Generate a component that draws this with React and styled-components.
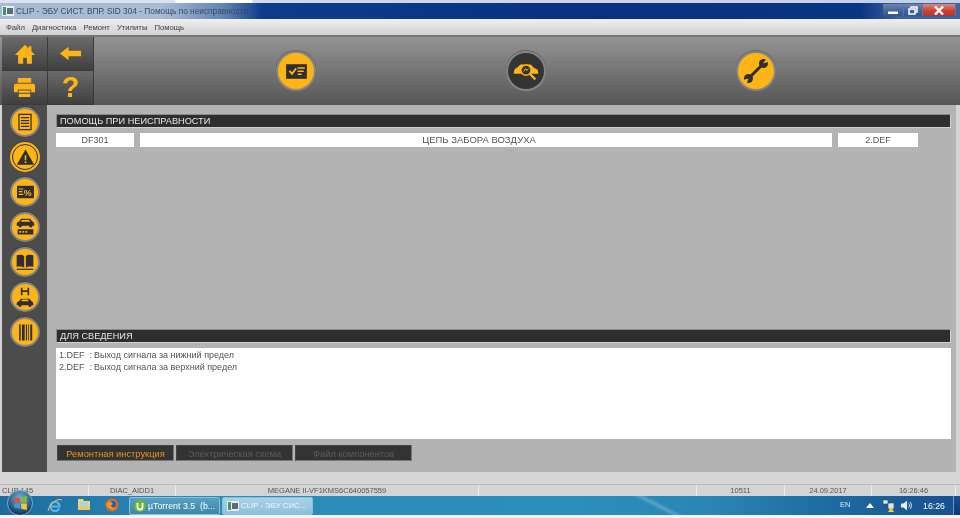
import React from "react";
import styled, { createGlobalStyle } from "styled-components";

const amber = "#fdb515";
const ink = "#2f2f33";

const Global = createGlobalStyle`
  html, body { margin: 0; padding: 0; background: #fff; }
  body { font-family: "Liberation Sans", Arial, sans-serif; overflow: hidden; }
`;

const Page = styled.div`
  display: flex;
  flex-direction: column;
  width: 960px;
  height: 518px;
  overflow: hidden;
  background: #d4d4d4;
  filter: blur(0.3px);
`;

const TopStrip = styled.div`
  flex: none;
  height: 3px;
  background: linear-gradient(90deg, #d8e2f0 0, #d8e2f0 175px, #fff 176px, #fff 252px, #cfd9ea 253px, #c3cfe4 100%);
`;

const TitleBar = styled.div`
  display: flex;
  align-items: center;
  justify-content: space-between;
  flex: none;
  height: 16px;
  padding: 0 4px 0 2px;
  background: linear-gradient(90deg, #a7bbd3 0, #aabcd4 160px, #5f82b4 225px, #0d3c8c 262px, #08317f 600px, #0a3583 860px, #3c62a0 900px);
  color: #3a4a5e;
  font-size: 8.3px;
`;

const TitleLeft = styled.div`
  display: flex;
  align-items: center;
  gap: 2px;
`;

const WindowButtons = styled.div`
  display: flex;
  height: 12px;
  align-self: flex-start;
  margin-top: 1px;
`;

const WindowButton = styled.div`
  display: flex;
  align-items: center;
  justify-content: center;
  width: ${(p) => p.$width}px;
  color: #fff;
  background: ${(p) =>
    p.$close
      ? "linear-gradient(#d98a84, #c9433a 55%, #b9332c)"
      : "linear-gradient(#6f86ad, #46659a 55%, #35568e)"};
  border-right: 1px solid #5d76a0;
  box-sizing: border-box;
`;

const MenuBar = styled.div`
  display: flex;
  align-items: center;
  gap: 7px;
  flex: none;
  height: 16px;
  padding-left: 6px;
  background: linear-gradient(#f0f0f0, #d0d0d0);
  color: #3d3d3d;
  font-size: 7.7px;
`;

const Toolbar = styled.div`
  display: flex;
  flex: none;
  height: 70px;
  box-sizing: border-box;
  border-top: 2px solid #767676;
  background: linear-gradient(#949494, #565656);
`;

const TileGrid = styled.div`
  display: grid;
  grid-template-columns: 46px 46px;
  grid-template-rows: 34px 34px;
  flex: none;
  padding-left: 2px;
`;

const Tile = styled.div`
  display: flex;
  align-items: center;
  justify-content: center;
  box-sizing: border-box;
  border-right: 1px solid #3a3a3a;
  border-bottom: 1px solid #3a3a3a;
  background: linear-gradient(#6b6b6b, #3f3f3f);
`;

const ActionRow = styled.div`
  display: flex;
  align-items: center;
  gap: 194px;
  padding-left: 184px;
`;

const Round = styled.div`
  display: flex;
  align-items: center;
  justify-content: center;
  flex: none;
  box-sizing: border-box;
  width: ${(p) => p.$size}px;
  height: ${(p) => p.$size}px;
  border-radius: 50%;
  background: ${(p) => (p.$dark ? "#333436" : amber)};
  border: ${(p) => (p.$active ? `1px solid ${ink}` : "none")};
  box-shadow: 0 0 0 ${(p) => (p.$active ? "2px " + amber : "2px #858585")},
    0 -1px 1px 2px rgba(40, 40, 40, 0.35);
`;

const Middle = styled.div`
  display: flex;
  flex: none;
  height: 367px;
  padding: 0 4px 0 2px;
`;

const Sidebar = styled.div`
  display: flex;
  flex-direction: column;
  align-items: center;
  gap: 9px;
  flex: none;
  width: 45px;
  box-sizing: border-box;
  padding: 4px 0 0 1px;
  background: #4c4c4c;
`;

const Content = styled.div`
  display: flex;
  flex-direction: column;
  flex: 1;
  padding: 9px 5px 0 9px;
  background: #b3b3b3;
`;

const Heading = styled.div`
  flex: none;
  height: 14px;
  box-sizing: border-box;
  padding-left: 3px;
  border: 1px solid #d0d0d0;
  border-top-color: #8a8a8a;
  border-left-color: #8a8a8a;
  background: #2e2e2e;
  color: #e6e6e6;
  font-size: 9.2px;
  line-height: 12px;
`;

const FaultRow = styled.div`
  display: flex;
  gap: 6px;
  margin-top: 5px;
  height: 14px;
  flex: none;
`;

const FaultCell = styled.div`
  flex: none;
  box-sizing: border-box;
  width: ${(p) => p.$width}px;
  padding-right: ${(p) => p.$inset || 0}px;
  background: #fff;
  color: #555;
  font-size: ${(p) => (p.$inset ? 9.5 : 9)}px;
  line-height: 14px;
  text-align: center;
`;

const Spacer = styled.div`
  flex: none;
  height: 182px;
`;

const InfoBox = styled.div`
  flex: none;
  height: 91px;
  box-sizing: border-box;
  margin-top: 5px;
  padding: 2px 3px;
  background: #fff;
  color: #555;
  font-size: 9px;
  line-height: 11.5px;
`;

const InfoLine = styled.div`
  display: flex;
  white-space: pre;
`;

const InfoCode = styled.span`
  flex: none;
  width: 35px;
`;

const TabRow = styled.div`
  display: flex;
  gap: 2px;
  margin: 6px 0 0 1px;
`;

const TabButton = styled.div`
  width: 117px;
  height: 16px;
  box-sizing: border-box;
  border: 1px solid #444;
  border-right-color: #777;
  border-bottom-color: #777;
  background: #333;
  color: ${(p) => (p.$active ? "#e8951a" : "#5c5c5c")};
  font-size: 9.3px;
  line-height: 16px;
  text-align: center;
`;

const WindowGap = styled.div`
  flex: none;
  height: 13px;
  background: #d6d6d6;
`;

const StatusBar = styled.div`
  display: grid;
  grid-template-columns: 87px 87px 303px 218px 88px 87px 84px;
  flex: none;
  height: 11px;
  padding: 0 4px 0 2px;
  background: #d4d4d4;
  border-top: 1px solid #bbb;
  margin-top: -1px;
  color: #555;
  font-size: 7.5px;
  line-height: 12px;
`;

const StatusCell = styled.div`
  box-sizing: border-box;
  border-right: 1px solid #ececec;
  text-align: ${(p) => (p.$left ? "left" : "center")};
  white-space: nowrap;
  overflow: hidden;
`;

const Taskbar = styled.div`
  display: flex;
  align-items: center;
  flex: none;
  height: 19px;
  background:
    linear-gradient(27deg, transparent 42%, rgba(255, 255, 255, 0.22) 50%, transparent 58%) 628px 0 / 60px 19px no-repeat,
    linear-gradient(90deg, #1c6b9f 0, #2a8cb8 20%, #2a8fb9 60%, #2a86b2 74%, #1f6ea3 85%, #174f8e 100%);
  color: #fff;
  font-size: 9.3px;
`;

const Orb = styled.div`
  display: flex;
  align-items: center;
  justify-content: center;
  flex: none;
  width: 26px;
  height: 26px;
  margin: -6px 0 -1px 7px;
  border-radius: 50%;
  border: 1px solid #7fa9c4;
  box-sizing: border-box;
  background: radial-gradient(circle at 50% 30%, #6fb6dc, #123e68 75%);
`;

const QuickIcon = styled.div`
  display: flex;
  justify-content: center;
  flex: none;
  width: 28.5px;
`;

const QuickLaunch = styled.div`
  display: flex;
  flex: none;
  margin-left: 8px;
  width: 88px;
`;

const TaskButton = styled.div`
  display: flex;
  align-items: center;
  gap: 2px;
  flex: none;
  width: 91px;
  height: 18px;
  box-sizing: border-box;
  margin-right: 2px;
  padding-left: 4px;
  border: 1px solid #8cc0d8;
  border-radius: 2px;
  background: ${(p) =>
    p.$active ? "linear-gradient(#a9d3e6, #8ebfd8)" : "linear-gradient(#5a9fc0, #3c87ab)"};
  color: ${(p) => (p.$active ? "#f2f8fb" : "#fff")};
  font-size: ${(p) => (p.$active ? 7.8 : 8.8)}px;
  white-space: pre;

  svg {
    flex: none;
  }
`;

const Tray = styled.div`
  display: flex;
  align-items: center;
  margin-left: auto;
`;

const TrayLang = styled.span`
  width: 21px;
  margin-bottom: 2px;
  font-size: 7.5px;
  color: #dce9f2;
`;

const TrayIcon = styled.div`
  display: flex;
  justify-content: center;
  width: 18px;
`;

const Clock = styled.span`
  width: 38px;
  font-size: 8.8px;
  text-align: center;
`;

const ShowDesktop = styled.div`
  width: 7px;
  height: 19px;
  background: linear-gradient(#1b4d8f, #0d3a78);
  border-left: 1px solid #6f97bd;
  box-sizing: border-box;
`;

const Bottom = styled.div`
  flex: 1;
  background: #f4f4f4;
`;

// icons drawn to match the CLIP tool set
const Svg = ({ size, children, color = ink }) => (
  <svg width={size} height={size} viewBox="0 0 24 24" fill={color} stroke="none">
    {children}
  </svg>
);

const HomeIcon = () => (
  <Svg size={22} color={amber}>
    <path d="M12 2 1 13h3.500v9.500h5.500V16h4v6.500h5.500V13H23l-4-4V3.500h-3v2.500z" />
  </Svg>
);
const BackIcon = () => (
  <Svg size={23} color={amber}>
    <path d="M1 12 10 5v4.200h13v5.600H10V19z" />
  </Svg>
);
const PrintIcon = () => (
  <Svg size={23} color={amber}>
    <path d="M5 2h14v5H5zM3 8h18a2 2 0 0 1 2 2v7h-4v-3H5v3H1v-7a2 2 0 0 1 2-2zM6 15h12v7H6z" />
    <path d="M6 17.500h12v1H6z" fill="#4a4a4a" />
  </Svg>
);
const Question = styled.span`
  color: ${amber};
  font: bold 29px "Liberation Sans", Arial, sans-serif;
`;
const CheckIcon = () => (
  <Svg size={25}>
    <path d="M2 5h20v14H2z" />
    <path d="m4.500 12 1.500-1.300 1.700 2 3.300-4.200 1.300 1-4.500 6.200z" fill={amber} />
    <path d="M13 8h7v1.400h-7zM13 11h6v1.400h-6zM13 14h4v1.400h-4z" fill={amber} />
  </Svg>
);
const CarScanIcon = () => (
  <svg width="28" height="28" viewBox="0 0 30 30" fill="none" stroke={amber}>
    <path d="M2 16c0-3 2-4 4-5l3-3h11l4 4c3 .5 4 2 4 4v2H2z" fill={amber} stroke="none" />
    <circle cx="15" cy="14" r="5.500" fill="#333436" strokeWidth="1.600" />
    <path d="m12.500 15.500 2-3 1.500 2 1.500-2" strokeWidth="1" />
    <path d="m19 18 6 6" strokeWidth="2.400" />
  </svg>
);
const WrenchIcon = () => (
  <svg width="28" height="28" viewBox="0 0 28 28">
    <path d="m7 21 14-14" stroke={ink} strokeWidth="3" strokeLinecap="round" />
    <circle cx="21.500" cy="6.500" r="4.500" fill={ink} />
    <circle cx="6.500" cy="21.500" r="4.500" fill={ink} />
    <path d="m21 6.500 3.500-5 3 3z" fill={amber} />
    <path d="m6.500 21.500-5.500 1.500 3.500 4z" fill={amber} />
  </svg>
);
const DocIcon = () => (
  <Svg size={20}>
    <path d="M4 2h16v20H4zM5.500 3.500v17h13v-17z" />
    <path d="M7 6h10v1.500H7zM7 9.500h10V11H7zM7 13h10v1.500H7zM7 16.500h10V18H7z" />
  </Svg>
);
const WarnIcon = () => (
  <Svg size={19}>
    <path d="M12 2 23 21H1z" />
    <path d="M11 9h2v6.500h-2zM11 16.800h2v2h-2z" fill={amber} />
  </Svg>
);
const PercentIcon = () => (
  <svg width="19" height="16" viewBox="0 0 21 18">
    <path d="M1 2h19v14H1z" fill={ink} />
    <path d="M3 5h5v1.300H3zM3 8h4v1.300H3zM3 11h5v1.300H3z" fill={amber} />
    <text x="8.500" y="13" fontSize="10" fontWeight="700" fontFamily="Liberation Sans" fill={amber}>%</text>
  </svg>
);
const CarPath = ({ y = 0 }) => (
  <path
    transform={`translate(0 ${y})`}
    d="M2 11c0-2 1.500-2.500 3-3l2-3h10l3 3c1.500.5 2 1.500 2 3v2h-2a2 2 0 0 1-4 0H8a2 2 0 0 1-4 0H2z"
  />
);
const CarBarIcon = () => (
  <Svg size={21}>
    <CarPath y={-3} />
    <path d="M8 3.500h8l1.500 2h-11z" fill={amber} />
    <path d="M3 14h18v6H3z" />
    <path d="M5 16h2v2H5zM8.500 16h2v2h-2zM12 16h2v2h-2z" fill={amber} />
  </Svg>
);
const BookIcon = () => (
  <Svg size={20}>
    <path d="M2 4c3-1 7-1 9 1v14c-2-1.500-6-2-9-1zM22 4c-3-1-7-1-9 1v14c2-1.500 6-2 9-1z" />
    <path d="M2 20h20v1.500H2z" />
  </Svg>
);
const DiskCarIcon = () => (
  <Svg size={20}>
    <path d="M7 1h2v3h6V1h2v9h-2V6H9v4H7z" />
    <CarPath y={9} />
    <path d="M8.500 15h7l1 2h-9z" fill={amber} />
  </Svg>
);
const BarcodeIcon = () => (
  <Svg size={19}>
    <path d="M4 2h2v20H4zM7.500 2H11v20H7.500zM12.500 2H14v20h-1.500zM15.500 2h1v20h-1zM18 2h2.500v20H18z" />
  </Svg>
);

const sideItems = [
  { icon: <DocIcon /> },
  { icon: <WarnIcon />, active: true },
  { icon: <PercentIcon /> },
  { icon: <CarBarIcon /> },
  { icon: <BookIcon /> },
  { icon: <DiskCarIcon /> },
  { icon: <BarcodeIcon /> },
];

const statusCells = ["DIAC_AIDD1", "MEGANE II-VF1KMS6C640057559", "", "10511", "24.09.2017", "16:26:46"];

const WindowsFlag = () => (
  <svg width="15" height="14" viewBox="0 0 13 12">
    <path d="M1 2 6 1v4.500H1z" fill="#e8502f" />
    <path d="M7 1l5-1v5.500H7z" fill="#7dbb3c" />
    <path d="M1 6.500h5V11l-5-1z" fill="#3f9bdc" />
    <path d="M7 6.500h5V12l-5-1z" fill="#f7c72f" />
  </svg>
);

const AppGlyph = () => (
  <svg width="12" height="10" viewBox="0 0 12 10">
    <path d="M0 0h12v10H0z" fill="#e8eef2" />
    <path d="M1 1h3v8H1z" fill="#4d8f6d" />
    <path d="M5 2h6v6H5z" fill="#5c6c7c" />
  </svg>
);

const App = () => (
  <Page>
    <Global />
    <TopStrip />
    <TitleBar>
      <TitleLeft>
        <AppGlyph />
        <span>CLIP - ЭБУ СИСТ. ВПР. SID 304 - Помощь по неисправности</span>
      </TitleLeft>
      <WindowButtons>
        <WindowButton $width={21}>
          <svg width="10" height="8" viewBox="0 0 10 8"><path d="M0 5.500h10V8H0z" fill="#fff" /></svg>
        </WindowButton>
        <WindowButton $width={19}>
          <svg width="10" height="9" viewBox="0 0 10 9" fill="none" stroke="#fff" strokeWidth="1.500">
            <path d="M3 2V1h6v5H7.500" />
            <path d="M1 3h6v5H1z" />
          </svg>
        </WindowButton>
        <WindowButton $width={33} $close>
          <svg width="10" height="9" viewBox="0 0 10 9" stroke="#fff" strokeWidth="2.400">
            <path d="m1 .500 8 8M9 .500l-8 8" />
          </svg>
        </WindowButton>
      </WindowButtons>
    </TitleBar>
    <MenuBar>
      <span>Файл</span>
      <span>Диагностика</span>
      <span>Ремонт</span>
      <span>Утилиты</span>
      <span>Помощь</span>
    </MenuBar>
    <Toolbar>
      <TileGrid>
        <Tile><HomeIcon /></Tile>
        <Tile><BackIcon /></Tile>
        <Tile><PrintIcon /></Tile>
        <Tile><Question>?</Question></Tile>
      </TileGrid>
      <ActionRow>
        <Round $size={36}><CheckIcon /></Round>
        <Round $size={36} $dark><CarScanIcon /></Round>
        <Round $size={36}><WrenchIcon /></Round>
      </ActionRow>
    </Toolbar>
    <Middle>
      <Sidebar>
        {sideItems.map((item, i) => (
          <Round key={i} $size={26} $active={item.active}>{item.icon}</Round>
        ))}
      </Sidebar>
      <Content>
        <Heading>ПОМОЩЬ ПРИ НЕИСПРАВНОСТИ</Heading>
        <FaultRow>
          <FaultCell $width={78}>DF301</FaultCell>
          <FaultCell $width={692} $inset={14}>ЦЕПЬ ЗАБОРА ВОЗДУХА</FaultCell>
          <FaultCell $width={80}>2.DEF</FaultCell>
        </FaultRow>
        <Spacer />
        <Heading>ДЛЯ СВЕДЕНИЯ</Heading>
        <InfoBox>
          <InfoLine><InfoCode>1.DEF  :</InfoCode>Выход сигнала за нижний предел</InfoLine>
          <InfoLine><InfoCode>2.DEF  :</InfoCode>Выход сигнала за верхний предел</InfoLine>
        </InfoBox>
        <TabRow>
          <TabButton $active>Ремонтная инструкция</TabButton>
          <TabButton>Электрическая схема</TabButton>
          <TabButton>Файл компонентов</TabButton>
        </TabRow>
      </Content>
    </Middle>
    <WindowGap />
    <StatusBar>
      <StatusCell $left>CLIP 145</StatusCell>
      {statusCells.map((text, i) => (
        <StatusCell key={i}>{text}</StatusCell>
      ))}
    </StatusBar>
    <Taskbar>
      <Orb><WindowsFlag /></Orb>
      <QuickLaunch>
        <QuickIcon>
          <svg width="16" height="16" viewBox="0 0 16 16" fill="none">
            <path d="M4 8.500h8.500C12.500 5.500 10.500 4 8 4S3.500 6 3.500 8.500 5.500 13 8 13c2 0 3.500-1 4.200-2.500" stroke="#58b4ee" strokeWidth="2.200" />
            <path d="M1 13C3 5 10 0 15 2" stroke="#f4c542" strokeWidth="1" />
          </svg>
        </QuickIcon>
        <QuickIcon>
          <svg width="14" height="13" viewBox="0 0 14 13">
            <path d="M1 1h5l1 2h6v9H1z" fill="#f2d27a" />
            <path d="M3 4h8v5H3z" fill="#a8d3ea" />
            <path d="M1 8h12v4H1z" fill="#efc75e" />
          </svg>
        </QuickIcon>
        <QuickIcon>
          <svg width="14" height="14" viewBox="0 0 14 14">
            <circle cx="7" cy="7" r="6.500" fill="#e9661f" />
            <circle cx="7.500" cy="6.500" r="3.500" fill="#2b5fa8" />
            <path d="M1 6c2 6 8 7 11 3-2 1-5 1-6-1 0-1 1-2 2-2L5 3z" fill="#f39a1f" />
          </svg>
        </QuickIcon>
      </QuickLaunch>
      <TaskButton>
        <svg width="12" height="12" viewBox="0 0 12 12">
          <circle cx="6" cy="6" r="6" fill="#6cb52d" />
          <path d="M3.500 3v4a2.500 2.500 0 0 0 5 0V3" fill="none" stroke="#fff" strokeWidth="1.800" />
        </svg>
        <span>µTorrent 3.5  (b...</span>
      </TaskButton>
      <TaskButton $active>
        <AppGlyph />
        <span>CLIP - ЭБУ СИС...</span>
      </TaskButton>
      <Tray>
        <TrayLang>EN</TrayLang>
        <TrayIcon>
          <svg width="8" height="5" viewBox="0 0 8 5"><path d="M4 0 8 5H0z" fill="#fff" /></svg>
        </TrayIcon>
        <TrayIcon>
          <svg width="13" height="13" viewBox="0 0 13 13">
            <path d="M1 1h5v4H1zM6 4h6v6H6z" fill="#dbe6ee" stroke="#33485c" strokeWidth=".6" />
            <path d="m9 8 3 5H6z" fill="#f6d13c" />
          </svg>
        </TrayIcon>
        <TrayIcon>
          <svg width="13" height="13" viewBox="0 0 13 13" fill="none" stroke="#e8eef2">
            <path d="M1 4.500h2.500L7 1.500v10l-3.500-3H1z" fill="#e8eef2" stroke="none" />
            <path d="M8.500 4.500a2.500 2.500 0 0 1 0 4M10 3a5 5 0 0 1 0 7" />
          </svg>
        </TrayIcon>
        <Clock>16:26</Clock>
        <ShowDesktop />
      </Tray>
    </Taskbar>
    <Bottom />
  </Page>
);

export default App;
